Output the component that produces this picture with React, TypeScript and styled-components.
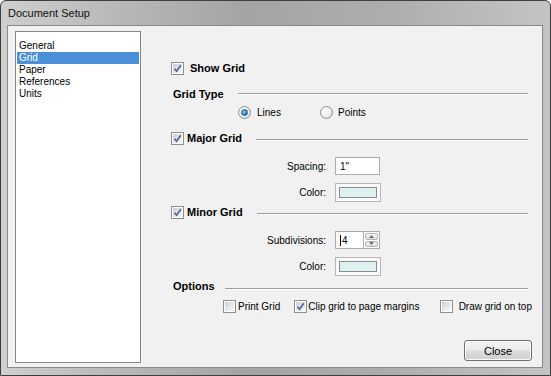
import styled, { createGlobalStyle } from 'styled-components';

const GlobalStyle = createGlobalStyle`
  html, body {
    margin: 0;
    padding: 0;
    background: #ffffff;
  }
  body {
    font-family: "Liberation Sans", Arial, sans-serif;
    font-size: 10px;
    color: #000;
  }
`;

const Window = styled.div`
  width: 551px;
  height: 376px;
  box-sizing: border-box;
  display: flex;
  flex-direction: column;
  border: 1px solid #3f3f3f;
  border-radius: 6px 6px 0 0;
  background: linear-gradient(90deg, #cfcfcf 0%, #b9b9b9 20%, #a4a4a4 45%, #adadad 70%, #c4c4c4 100%);
  padding: 0 7px 7px 6px;
  overflow: hidden;
`;

const TitleBar = styled.div`
  height: 23px;
  flex-shrink: 0;
  display: flex;
  align-items: center;
  padding-left: 1px;
  padding-bottom: 1px;
  font-size: 11px;
  color: #111;
`;

const Client = styled.div`
  flex: 1;
  min-height: 0;
  display: flex;
  background: #f0f1f0;
  border: 1px solid #8a8a8a;
  padding: 5px 10px 0 7px;
`;

const ListBox = styled.div`
  width: 122px;
  height: 322px;
  flex-shrink: 0;
  background: #fff;
  border: 1px solid #828790;
  padding: 8px 1px 0;
  display: flex;
  flex-direction: column;
`;

const ListItem = styled.div<{ $selected?: boolean }>`
  height: 12px;
  line-height: 12px;
  padding-left: 2px;
  background: ${(p) => (p.$selected ? '#4a8fd8' : 'transparent')};
  color: ${(p) => (p.$selected ? '#fff' : '#000')};
`;

const Panel = styled.div`
  flex: 1;
  min-width: 0;
  display: flex;
  flex-direction: column;
  padding-left: 30px;
`;

const Row = styled.div<{ $top: number; $h?: number; $indent?: number }>`
  margin-top: ${(p) => p.$top}px;
  height: ${(p) => p.$h ?? 14}px;
  display: flex;
  align-items: center;
  padding-left: ${(p) => p.$indent ?? 0}px;
`;

const Bold = styled.span<{ $w: number; $pad?: number }>`
  font-weight: bold;
  font-size: 11px;
  width: ${(p) => p.$w}px;
  padding-left: ${(p) => p.$pad ?? 0}px;
  flex-shrink: 0;
`;

const Rule = styled.div<{ $dy?: number }>`
  flex: 1;
  height: 0;
  border-top: 1px solid #9c9c9c;
  border-bottom: 1px solid #ffffff;
  margin-top: ${(p) => p.$dy ?? 0}px;
  margin-right: 4px;
`;

const Label = styled.span<{ $gap?: number }>`
  margin-left: ${(p) => p.$gap ?? 5}px;
  white-space: nowrap;
`;

const Group = styled.div<{ $w?: number }>`
  display: flex;
  align-items: center;
  width: ${(p) => (p.$w ? `${p.$w}px` : 'auto')};
`;

const FieldLabel = styled.span`
  width: 155px;
  text-align: right;
  padding-right: 9px;
  flex-shrink: 0;
`;

const TextBox = styled.div<{ $w: number }>`
  width: ${(p) => p.$w}px;
  height: 18px;
  box-sizing: border-box;
  background: #fff;
  border: 1px solid #abadb3;
  border-top-color: #a3a5ab;
  padding: 0 4px;
  display: flex;
  align-items: center;
`;

const Spin = styled.div`
  display: flex;
  height: 18px;
`;

const SpinButtons = styled.div`
  width: 16px;
  height: 18px;
  box-sizing: border-box;
  border: 1px solid #abadb3;
  border-left: none;
  display: flex;
  flex-direction: column;
  background: #fff;
  padding: 1px;
  gap: 1px;
`;

const SpinBtn = styled.div`
  flex: 1;
  border: 1px solid #b5b5b5;
  border-radius: 2px;
  background: linear-gradient(#f5f5f5, #dedede);
  display: flex;
  align-items: center;
  justify-content: center;
`;

const Caret = styled.div`
  width: 1px;
  height: 11px;
  background: #000;
  margin-right: 1px;
`;

const SwatchFrame = styled.div`
  width: 46px;
  height: 19px;
  box-sizing: border-box;
  border: 1px solid #b7b7b7;
  background: #fafafa;
  padding: 3px;
`;

const Swatch = styled.div`
  height: 100%;
  box-sizing: border-box;
  border: 1px solid #8c8c8c;
  background: #dff0f1;
`;

const BoxOuter = styled.div`
  width: 13px;
  height: 13px;
  box-sizing: border-box;
  border: 1px solid #8e8f8f;
  background: #fff;
  padding: 1px;
  flex-shrink: 0;
`;

const BoxInner = styled.div`
  width: 100%;
  height: 100%;
  background: linear-gradient(135deg, #cbcfd5 0%, #e8eaec 60%, #f6f6f6 100%);
  display: flex;
  align-items: center;
  justify-content: center;
`;

const RadioOuter = styled.div`
  width: 13px;
  height: 13px;
  box-sizing: border-box;
  border-radius: 50%;
  border: 1px solid #8e8f8f;
  background: radial-gradient(circle at 35% 35%, #fff 0%, #e4e5e7 70%, #cfd1d4 100%);
  display: flex;
  align-items: center;
  justify-content: center;
  flex-shrink: 0;
`;

const RadioDot = styled.div`
  width: 5px;
  height: 5px;
  border-radius: 50%;
  background: radial-gradient(circle at 40% 40%, #8fd3f5 0%, #1b6fb3 70%, #0e4a87 100%);
  border: 1px solid #2a5f91;
`;

const ButtonRow = styled.div`
  margin-top: 27px;
  display: flex;
  justify-content: flex-end;
`;

const Button = styled.div`
  width: 68px;
  height: 21px;
  box-sizing: border-box;
  border: 1px solid #707070;
  border-radius: 3px;
  background: linear-gradient(#f4f4f4 0%, #ebebeb 48%, #dddddd 52%, #cfcfcf 100%);
  box-shadow: inset 0 0 0 1px #fcfcfc;
  display: flex;
  align-items: center;
  justify-content: center;
  font-size: 11px;
`;

function Check({ checked }: { checked?: boolean }) {
  return (
    <BoxOuter>
      <BoxInner>
        {checked && (
          <svg width="9" height="9" viewBox="0 0 9 9">
            <path d="M1.5 4.8 L3.6 7.2 L7.8 1.2" fill="none" stroke="#4a5e9a" strokeWidth="1.6" />
          </svg>
        )}
      </BoxInner>
    </BoxOuter>
  );
}

function Radio({ checked }: { checked?: boolean }) {
  return <RadioOuter>{checked && <RadioDot />}</RadioOuter>;
}

const items = ['General', 'Grid', 'Paper', 'References', 'Units'];

export default function App() {
  return (
    <>
      <GlobalStyle />
      <Window>
        <TitleBar>Document Setup</TitleBar>
        <Client>
          <ListBox>
            {items.map((it) => (
              <ListItem key={it} $selected={it === 'Grid'}>
                {it}
              </ListItem>
            ))}
          </ListBox>
          <Panel>
            <Row $top={30}>
              <Check checked />
              <Bold $w={80} $pad={6}>Show Grid</Bold>
            </Row>
            <Row $top={12}>
              <Bold $w={65} $pad={2}>Grid Type</Bold>
              <Rule />
            </Row>
            <Row $top={4} $indent={67}>
              <Group $w={82}>
                <Radio checked />
                <Label $gap={6}>Lines</Label>
              </Group>
              <Group>
                <Radio />
                <Label $gap={5}>Points</Label>
              </Group>
            </Row>
            <Row $top={12}>
              <Check checked />
              <Bold $w={69} $pad={3}>Major Grid</Bold>
              <Rule $dy={4} />
            </Row>
            <Row $top={12} $h={18}>
              <FieldLabel>Spacing:</FieldLabel>
              <TextBox $w={45}>1"</TextBox>
            </Row>
            <Row $top={8} $h={19}>
              <FieldLabel>Color:</FieldLabel>
              <SwatchFrame>
                <Swatch />
              </SwatchFrame>
            </Row>
            <Row $top={3}>
              <Check checked />
              <Bold $w={70} $pad={3}>Minor Grid</Bold>
              <Rule $dy={4} />
            </Row>
            <Row $top={12} $h={18}>
              <FieldLabel>Subdivisions:</FieldLabel>
              <Spin>
                <TextBox $w={29}>
                  <Caret />4
                </TextBox>
                <SpinButtons>
                  <SpinBtn>
                    <svg width="5" height="3" viewBox="0 0 5 3">
                      <path d="M0 3 L2.5 0 L5 3 Z" fill="#6d6d6d" />
                    </svg>
                  </SpinBtn>
                  <SpinBtn>
                    <svg width="5" height="3" viewBox="0 0 5 3">
                      <path d="M0 0 L2.5 3 L5 0 Z" fill="#6d6d6d" />
                    </svg>
                  </SpinBtn>
                </SpinButtons>
              </Spin>
            </Row>
            <Row $top={8} $h={19}>
              <FieldLabel>Color:</FieldLabel>
              <SwatchFrame>
                <Swatch />
              </SwatchFrame>
            </Row>
            <Row $top={3}>
              <Bold $w={52} $pad={2}>Options</Bold>
              <Rule $dy={5} />
            </Row>
            <Row $top={6} $indent={52}>
              <Group $w={73}>
                <Check />
                <Label $gap={2}>Print Grid</Label>
              </Group>
              <Group $w={149}>
                <Check checked />
                <Label $gap={1}>Clip grid to page margins</Label>
              </Group>
              <Group>
                <Check />
                <Label $gap={6}>Draw grid on top</Label>
              </Group>
            </Row>
            <ButtonRow>
              <Button>Close</Button>
            </ButtonRow>
          </Panel>
        </Client>
      </Window>
    </>
  );
}
